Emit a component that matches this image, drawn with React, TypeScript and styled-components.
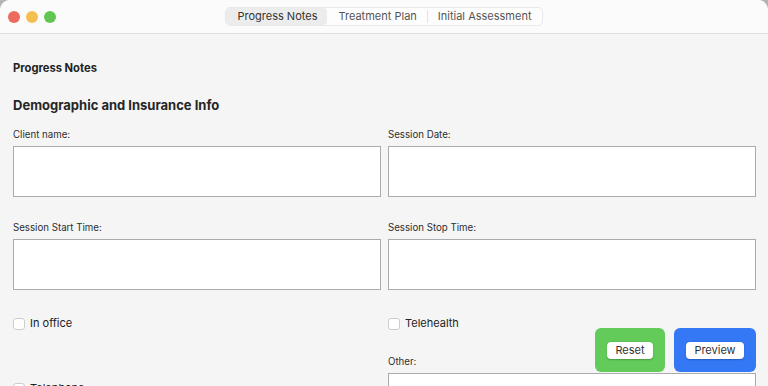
import { createGlobalStyle } from "styled-components";
import styled from "styled-components";

const GlobalStyle = createGlobalStyle`
  html, body {
    margin: 0;
    padding: 0;
    background: #b4b4b4;
    font-family: Inter, "Noto Sans", "Liberation Sans", sans-serif;
    -webkit-font-smoothing: antialiased;
  }
  * { box-sizing: border-box; }
`;

// Window frame
const Window = styled.div`
  height: 100vh;
  background-color: #f5f5f5;
  border-radius: 10px 10px 0 0;
  overflow: hidden;
  position: relative;
`;

const TitleBar = styled.div`
  height: 34px;
  background-color: #fbfbfb;
  border-bottom: 1px solid #dfdfdf;
  display: grid;
  grid-template-columns: 1fr auto 1fr;
  align-items: center;
  padding: 0 8px;
`;

const Lights = styled.div`
  display: flex;
  gap: 6px;
  align-items: center;
`;

const Light = styled.span<{ $color: string }>`
  width: 12px;
  height: 12px;
  border-radius: 50%;
  background-color: ${(p) => p.$color};
`;

const Segmented = styled.div`
  display: flex;
  align-items: stretch;
  height: 19px;
  border: 1px solid #e8e8e8;
  border-radius: 5px;
  background: #fdfdfd;
  margin-top: -1px;
`;

const Tab = styled.div<{ $active?: boolean; $divider?: boolean }>`
  display: flex;
  align-items: center;
  justify-content: center;
  padding: 0 10px;
  font-size: 11px;
  color: ${(p) => (p.$active ? "#333" : "#555")};
  background-color: ${(p) => (p.$active ? "#ececec" : "transparent")};
  border-left: ${(p) => (p.$divider ? "1px solid #e2e2e2" : "1px solid transparent")};
  border-radius: ${(p) => (p.$divider ? "0" : "4px")};
  margin: ${(p) => (p.$divider ? "2px 0" : "0")};
`;

// Form content
const Content = styled.div`
  padding: 27px 12px 0 13px;
`;

const PageTitle = styled.div`
  font-size: 11.2px;
  font-weight: 700;
  color: #222;
  line-height: 15px;
`;

const SectionTitle = styled.div`
  font-size: 13px;
  font-weight: 700;
  color: #262626;
  line-height: 18px;
  margin-top: 20px;
`;

const Grid = styled.div`
  display: grid;
  grid-template-columns: 1fr 1fr;
  column-gap: 7px;
  margin-top: 15px;
`;

const Field = styled.div<{ $gapTop?: number }>`
  display: flex;
  flex-direction: column;
  margin-top: ${(p) => p.$gapTop ?? 0}px;
`;

const Label = styled.label`
  font-size: 9.7px;
  line-height: 12px;
  color: #2e2e2e;
  margin-bottom: 5px;
`;

const Input = styled.div`
  height: 51px;
  background: #fff;
  border: 1px solid #ababab;
`;

const CheckRow = styled.div<{ $gapTop?: number }>`
  display: flex;
  align-items: center;
  gap: 5px;
  margin-top: ${(p) => p.$gapTop ?? 0}px;
  font-size: 11px;
  color: #222;
  line-height: 15px;
`;

const Box = styled.span`
  width: 12px;
  height: 12px;
  border: 1px solid #cdcdcd;
  border-radius: 3px;
  background: #fff;
`;

const Column = styled.div`
  display: flex;
  flex-direction: column;
`;

// Floating action buttons
const Actions = styled.div`
  position: fixed;
  right: 12px;
  top: 328px;
  display: flex;
  gap: 9px;
`;

const ActionPanel = styled.div<{ $bg: string; $w: number }>`
  width: ${(p) => p.$w}px;
  height: 44px;
  border-radius: 6px;
  background-color: ${(p) => p.$bg};
  display: flex;
  align-items: center;
  justify-content: center;
`;

const ActionButton = styled.button`
  height: 17px;
  padding: 0 8px;
  border: none;
  border-radius: 4px;
  background: #fff;
  font-family: inherit;
  font-size: 11px;
  color: #333;
  box-shadow: 0 0.5px 1.5px rgba(0, 0, 0, 0.25);
`;

export default function App() {
  return (
    <>
      <GlobalStyle />
      <Window>
        <TitleBar>
          <Lights>
            <Light $color="#ed6a5e" />
            <Light $color="#f5bf4f" />
            <Light $color="#61c554" />
          </Lights>
          <Segmented>
            <Tab $active>Progress Notes</Tab>
            <Tab>Treatment Plan</Tab>
            <Tab $divider>Initial Assessment</Tab>
          </Segmented>
          <div />
        </TitleBar>

        <Content>
          <PageTitle>Progress Notes</PageTitle>
          <SectionTitle>Demographic and Insurance Info</SectionTitle>

          <Grid>
            <Field>
              <Label>Client name:</Label>
              <Input />
            </Field>
            <Field>
              <Label>Session Date:</Label>
              <Input />
            </Field>
            <Field $gapTop={25}>
              <Label>Session Start Time:</Label>
              <Input />
            </Field>
            <Field $gapTop={25}>
              <Label>Session Stop Time:</Label>
              <Input />
            </Field>

            <Column>
              <CheckRow $gapTop={26}>
                <Box />
                In office
              </CheckRow>
              <CheckRow $gapTop={50}>
                <Box />
                Telephone
              </CheckRow>
            </Column>
            <Column>
              <CheckRow $gapTop={26}>
                <Box />
                Telehealth
              </CheckRow>
              <Field $gapTop={25}>
                <Label>Other:</Label>
                <Input />
              </Field>
            </Column>
          </Grid>
        </Content>

        <Actions>
          <ActionPanel $bg="#62cb5a" $w={70}>
            <ActionButton>Reset</ActionButton>
          </ActionPanel>
          <ActionPanel $bg="#3478f6" $w={82}>
            <ActionButton>Preview</ActionButton>
          </ActionPanel>
        </Actions>
      </Window>
    </>
  );
}
